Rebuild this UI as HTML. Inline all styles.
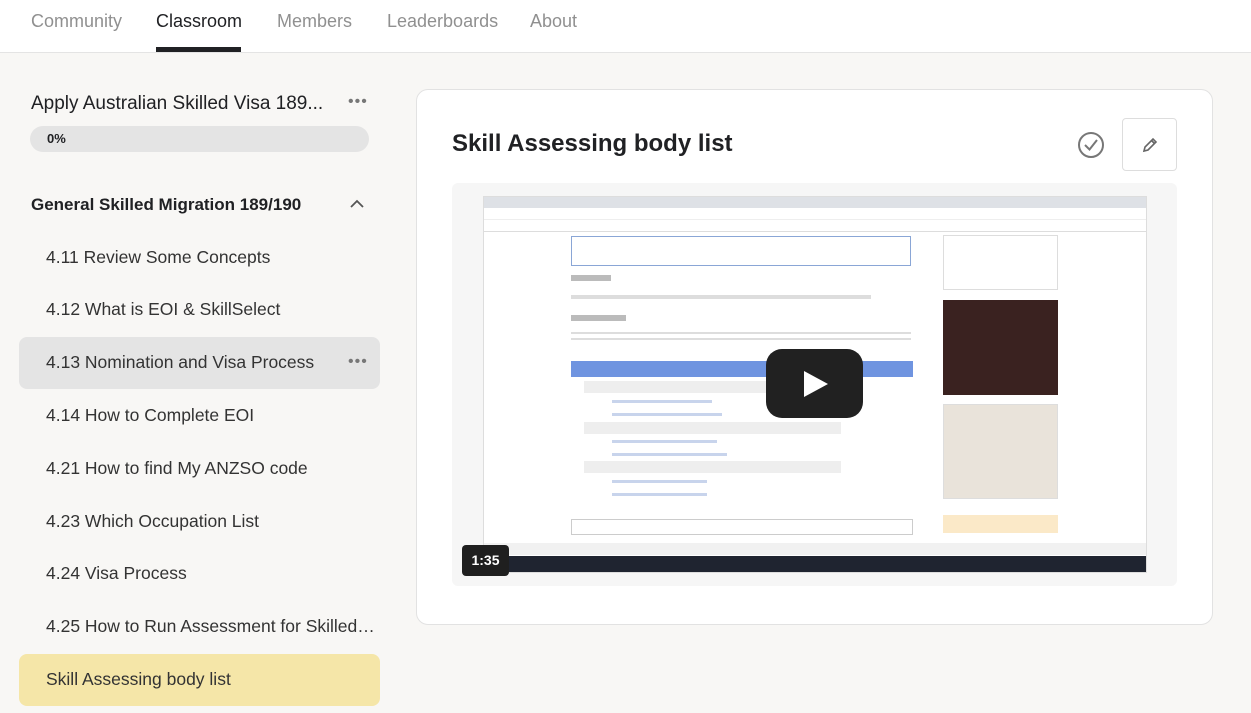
<!DOCTYPE html>
<html><head><meta charset="utf-8"><style>
*{box-sizing:border-box;margin:0;padding:0}
body{width:1251px;height:713px;overflow:hidden;background:#f8f7f5;font-family:"Liberation Sans",sans-serif;position:relative}
.nav{position:absolute;left:0;top:0;width:1251px;height:53px;background:#fff;border-bottom:1px solid #e4e4e4}
.nav span{position:absolute;top:11px;font-size:18px;color:#909090}
.nav .act{color:#202124}
.nav .bar{position:absolute;left:156px;top:47px;width:85px;height:5px;background:#202124}
.t1{position:absolute;left:31px;top:93px;font-size:19px;color:#202124}
.dots{position:absolute;font-size:16px;color:#777;letter-spacing:1px}
.prog{position:absolute;left:30px;top:126px;width:339px;height:26px;border-radius:13px;background:#e4e4e4;font-size:13px;font-weight:bold;padding:5px 17px;color:#202124}
.sec{position:absolute;left:31px;top:195px;font-size:17px;font-weight:bold;color:#202124}
.item{position:absolute;left:19px;width:361px;height:52px;border-radius:8px;font-size:17.5px;color:#333;padding:15px 27px;white-space:nowrap;overflow:hidden}
.card{position:absolute;left:416px;top:89px;width:797px;height:536px;background:#fff;border:1px solid #e2e2e2;border-radius:12px}
.title{position:absolute;left:452px;top:130px;font-size:24px;font-weight:bold;color:#202124}
.edit{position:absolute;left:1122px;top:118px;width:55px;height:53px;border:1px solid #ddd;border-radius:4px;background:#fff}
.video{position:absolute;left:452px;top:183px;width:725px;height:403px;background:#f6f6f6;border-radius:6px}
.scr{position:absolute;left:483px;top:196px;width:664px;height:377px;background:#fff;border:1px solid #ddd}
.ln{position:absolute;height:3px;background:#c8d4ec}
</style></head><body>
<div class="nav">
<span style="left:31px">Community</span>
<span class="act" style="left:156px">Classroom</span>
<span style="left:277px">Members</span>
<span style="left:387px">Leaderboards</span>
<span style="left:530px">About</span>
<div class="bar"></div>
</div>
<div class="t1">Apply Australian Skilled Visa 189...</div>
<div class="dots" style="left:348px;top:93px">•••</div>
<div class="prog">0%</div>
<div class="sec">General Skilled Migration 189/190</div>
<svg style="position:absolute;left:350px;top:199px" width="14" height="10"><path d="M1 8 L7 2 L13 8" fill="none" stroke="#555" stroke-width="1.8"/></svg>
<div class="item" style="top:232px">4.11 Review Some Concepts</div>
<div class="item" style="top:284px">4.12 What is EOI &amp; SkillSelect</div>
<div class="item" style="top:337px;background:#e4e4e4">4.13 Nomination and Visa Process</div>
<div class="dots" style="left:348px;top:353px">•••</div>
<div class="item" style="top:390px">4.14 How to Complete EOI</div>
<div class="item" style="top:443px">4.21 How to find My ANZSO code</div>
<div class="item" style="top:496px">4.23 Which Occupation List</div>
<div class="item" style="top:548px">4.24 Visa Process</div>
<div class="item" style="top:601px">4.25 How to Run Assessment for Skilled…</div>
<div class="item" style="top:654px;background:#f5e6a8">Skill Assessing body list</div>
<div class="card"></div>
<div class="title">Skill Assessing body list</div>
<svg style="position:absolute;left:1077px;top:131px" width="28" height="28"><circle cx="14" cy="14" r="12" fill="none" stroke="#777" stroke-width="2"/><path d="M8 14 L12.5 18.5 L20 9" fill="none" stroke="#777" stroke-width="2"/></svg>
<div class="edit"><svg style="position:absolute;left:18px;top:17px" width="18" height="18"><path d="M3 15 L4 11 L12 3 L15 6 L7 14 Z M10.5 4.5 L13.5 7.5" fill="none" stroke="#666" stroke-width="1.6"/></svg></div>
<div class="video"></div>
<div class="scr">
<div style="height:11px;background:#dee1e6"></div>
<div style="height:12px;background:#fff;border-bottom:1px solid #eee"></div>
<div style="height:12px;background:#fff;border-bottom:1px solid #ddd"></div>
<div style="position:absolute;left:87px;top:39px;width:340px;height:30px;border:1px solid #8aa6d6"></div>
<div style="position:absolute;left:87px;top:78px;width:40px;height:6px;background:#bbb"></div>
<div style="position:absolute;left:87px;top:98px;width:300px;height:4px;background:#ddd"></div>
<div style="position:absolute;left:87px;top:118px;width:55px;height:6px;background:#bbb"></div>
<div style="position:absolute;left:87px;top:133px;width:340px;height:14px;background:repeating-linear-gradient(#fff 0 2px,#ddd 2px 4px,#fff 4px 6px)"></div>
<div style="position:absolute;left:87px;top:164px;width:342px;height:16px;background:#6f94e0"></div>
<div style="position:absolute;left:100px;top:184px;width:257px;height:12px;background:#eee"></div>
<div class="ln" style="left:128px;top:203px;width:100px"></div>
<div class="ln" style="left:128px;top:216px;width:110px"></div>
<div style="position:absolute;left:100px;top:225px;width:257px;height:12px;background:#eee"></div>
<div class="ln" style="left:128px;top:243px;width:105px"></div>
<div class="ln" style="left:128px;top:256px;width:115px"></div>
<div style="position:absolute;left:100px;top:264px;width:257px;height:12px;background:#eee"></div>
<div class="ln" style="left:128px;top:283px;width:95px"></div>
<div class="ln" style="left:128px;top:296px;width:95px"></div>
<div style="position:absolute;left:87px;top:322px;width:342px;height:16px;border:1px solid #ccc"></div>
<div style="position:absolute;left:459px;top:38px;width:115px;height:55px;border:1px solid #ddd"></div>
<div style="position:absolute;left:459px;top:103px;width:115px;height:95px;background:#3a2220"></div>
<div style="position:absolute;left:459px;top:207px;width:115px;height:95px;background:#e9e3da;border:1px solid #ddd"></div>
<div style="position:absolute;left:459px;top:318px;width:115px;height:18px;background:#fbe9c8"></div>
<div style="position:absolute;left:0;top:346px;width:662px;height:12px;background:#f1f1f1"></div>
<div style="position:absolute;left:0;top:359px;width:662px;height:16px;background:#1f2430"></div>
</div>
<div style="position:absolute;left:766px;top:349px;width:97px;height:69px;background:#212121;border-radius:16px"></div>
<svg style="position:absolute;left:802px;top:370px" width="28" height="28"><path d="M2 1 L26 14 L2 27 Z" fill="#fff"/></svg>
<div style="position:absolute;left:462px;top:545px;width:47px;height:31px;background:#1f1f1f;border-radius:4px;color:#fff;font-size:14px;font-weight:bold;text-align:center;line-height:31px">1:35</div>
</body></html>
